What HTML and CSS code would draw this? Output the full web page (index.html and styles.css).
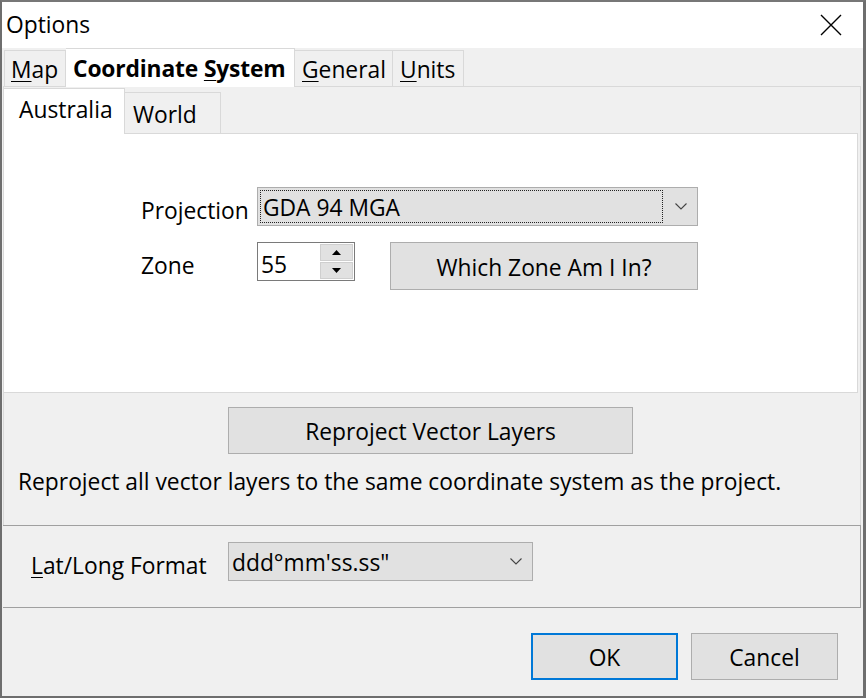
FILE: index.html
```html
<!DOCTYPE html>
<html>
<head>
<meta charset="utf-8">
<link rel="stylesheet" href="styles.css">
</head>
<body>
<div class="window">
  <div class="titlebar">
    <span class="title">Options</span>
    <svg class="close" width="22" height="22" viewBox="0 0 22 22"><path d="M1 1 L21 21 M21 1 L1 21" stroke="#000" stroke-width="1.4" fill="none"/></svg>
  </div>
  <div class="client">
    <div class="outer-tabs">
      <div class="tab"><span><u>M</u>ap</span></div>
      <div class="tab sel"><span>Coordinate <u>S</u>ystem</span></div>
      <div class="tab"><span><u>G</u>eneral</span></div>
      <div class="tab"><span><u>U</u>nits</span></div>
    </div>
    <div class="outer-page">
      <div class="inner-tabs">
        <div class="itab sel"><span>Australia</span></div>
        <div class="itab"><span>World</span></div>
      </div>
      <div class="inner-panel">
        <div class="form">
          <div class="label">Projection</div>
          <div class="combo proj">
            <div class="focus"><span>GDA 94 MGA</span></div>
            <svg class="chev" width="12" height="7" viewBox="0 0 12 7"><path d="M0.5 0.5 L6 6 L11.5 0.5" stroke="#444" stroke-width="1.1" fill="none"/></svg>
          </div>
          <div class="label">Zone</div>
          <div class="zone-row">
            <div class="spin">
              <span class="spin-val">55</span>
              <div class="spin-btns">
                <div class="sbtn"><svg width="9" height="5" viewBox="0 0 9 5"><path d="M0 5 L4.5 0 L9 5 Z" fill="#000"/></svg></div>
                <div class="sbtn"><svg width="9" height="5" viewBox="0 0 9 5"><path d="M0 0 L4.5 5 L9 0 Z" fill="#000"/></svg></div>
              </div>
            </div>
            <div class="btn which"><span>Which Zone Am I In?</span></div>
          </div>
        </div>
      </div>
      <div class="reproject">
        <div class="btn repro"><span>Reproject Vector Layers</span></div>
        <div class="note">Reproject all vector layers to the same coordinate system as the project.</div>
      </div>
    </div>
    <div class="latlong">
      <div class="ll-label"><u>L</u>at/Long Format</div>
      <div class="combo ll">
        <span class="ll-val">ddd°mm'ss.ss"</span>
        <svg class="chev" width="12" height="7" viewBox="0 0 12 7"><path d="M0.5 0.5 L6 6 L11.5 0.5" stroke="#444" stroke-width="1.1" fill="none"/></svg>
      </div>
    </div>
    <div class="buttons">
      <div class="btn dlg default"><span>OK</span></div>
      <div class="btn dlg"><span>Cancel</span></div>
    </div>
  </div>
</div>
</body>
</html>
```
FILE: styles.css
```css
* { box-sizing: border-box; }
html, body { margin: 0; padding: 0; background: #fff; }
body {
  font-family: "Open Sans", "Noto Sans", sans-serif;
  font-size: 22.8px;
  color: #000;
}
u { text-decoration: underline; text-underline-offset: 3px; text-decoration-thickness: 1px; }
.window {
  width: 866px;
  height: 698px;
  border-top: 2px solid #777;
  border-left: 2px solid #6e6e6e;
  border-right: 3px solid #6e6e6e;
  border-bottom: 2px solid #6e6e6e;
  display: flex;
  flex-direction: column;
  background: #f0f0f0;
}
.titlebar {
  height: 46px;
  background: #fff;
  display: flex;
  align-items: center;
  justify-content: space-between;
  padding: 0 21px 0 4px;
  flex: none;
}
.title { font-size: 22.8px; line-height: 1; }
.close { display: block; }
.client { flex: 1; display: flex; flex-direction: column; }
.outer-tabs {
  height: 38px;
  display: flex;
  align-items: flex-end;
  padding-left: 2px;
  flex: none;
  position: relative;
  z-index: 1;
}
.tab {
  height: 36px;
  padding: 4px 7px 0;
  display: flex;
  align-items: center;
  border: 1px solid #d9d9d9;
  border-bottom: none;
  border-left: none;
  background: #f0f0f0;
  line-height: 1;
  white-space: nowrap;
}
.tab:first-child { border-left: 1px solid #d9d9d9; width: 62px; padding-left: 6px; }
.tab.sel {
  height: 39px;
  margin-bottom: -1px;
  background: #fff;
  width: 229px;
  padding: 2px 6px 0 7px;
  font-weight: 700;
  letter-spacing: -0.15px;
}
.tab:nth-child(3) { width: 98px; }
.tab:nth-child(4) { width: 71px; }
.outer-page {
  margin-left: 1px;
  width: 858px;
  height: 439px;
  border: 1px solid #d9d9d9;
  border-bottom: none;
  display: flex;
  flex-direction: column;
  flex: none;
}
.inner-tabs {
  height: 46px;
  display: flex;
  align-items: flex-end;
  position: relative;
  z-index: 1;
  flex: none;
}
.itab {
  height: 41px;
  width: 96px;
  border: 1px solid #d9d9d9;
  border-left: none;
  border-bottom: none;
  background: #f0f0f0;
  display: flex;
  align-items: center;
  padding: 4px 0 0 8px;
  line-height: 1;
}
.itab.sel {
  width: 121px;
  height: 46px;
  margin-bottom: -1px;
  background: #fff;
  border-left: none;
  padding: 0 0 2px 15px;
}
.inner-panel {
  width: 854px;
  height: 260px;
  background: #fff;
  border: 1px solid #d9d9d9;
  border-left: none;
  flex: none;
  padding: 53px 0 0 137px;
}
.form {
  display: grid;
  grid-template-columns: 116px auto;
  row-gap: 16px;
  align-items: start;
}
.label { padding-top: 9px; line-height: 30px; }
.combo {
  background: #e1e1e1;
  border: 1px solid #adadad;
  height: 39px;
  display: flex;
  align-items: center;
  position: relative;
  line-height: 1;
}
.combo.proj { width: 441px; padding: 2px; }
.focus {
  width: 403px;
  height: 33px;
  border: 1px dotted #222;
  padding: 3px 0 0 2px;
  display: flex;
  align-items: center;
}
.chev { position: absolute; right: 10px; top: 15px; }
.zone-row { display: flex; align-items: flex-start; gap: 35px; }
.spin {
  width: 98px;
  height: 39px;
  border: 1px solid #7a7a7a;
  background: #fff;
  display: flex;
  justify-content: space-between;
  padding: 1px;
}
.spin-val { padding: 3px 0 0 2px; line-height: 36px; }
.spin-btns { width: 33px; display: flex; flex-direction: column; gap: 1px; }
.sbtn {
  flex: 1;
  background: #e1e1e1;
  border: 1px solid #cfcfcf;
  display: flex;
  align-items: center;
  justify-content: center;
}
.sbtn svg { display: block; }
.btn {
  background: #e1e1e1;
  border: 1px solid #adadad;
  display: flex;
  align-items: center;
  justify-content: center;
  line-height: 1;
  white-space: nowrap;
  padding-top: 4px;
}
.which { width: 308px; height: 48px; }
.reproject {
  flex: 1;
  padding-top: 14px;
}
.repro { width: 405px; height: 47px; margin-left: 224px; }
.note { margin: 14px 0 0 14px; line-height: 28px; white-space: nowrap; }
.latlong {
  margin-left: 1px;
  width: 858px;
  height: 83px;
  border-top: 1px solid #a0a0a0;
  border-bottom: 1px solid #a0a0a0;
  border-right: 1px solid #a0a0a0;
  display: flex;
  align-items: flex-start;
  padding: 16px 0 0 28px;
  flex: none;
}
.ll-label { width: 197px; padding-top: 9px; line-height: 30px; }
.combo.ll { width: 305px; padding: 4px 0 0 3px; }
.buttons {
  display: flex;
  justify-content: flex-end;
  gap: 13px;
  padding: 25px 25px 0 0;
}
.dlg { width: 147px; height: 47px; }
.default { border: 2px solid #0078d7; }
```
